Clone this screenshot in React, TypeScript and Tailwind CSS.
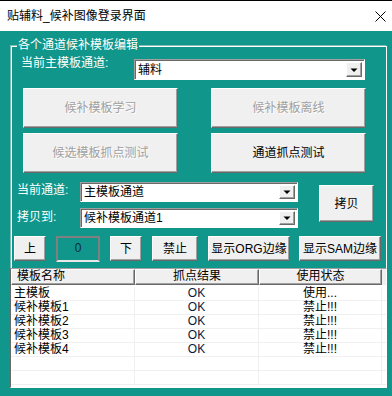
import React from "react";

const font = "font-['Liberation_Sans','Noto_Sans_CJK_SC',sans-serif]";

const raised =
  "bg-[#f0f0f0] border border-t-white border-l-white border-r-[#696969] border-b-[#696969] shadow-[inset_-1px_-1px_0_#a0a0a0]";

function WinButton({
  label,
  cls,
  disabled,
}: {
  label: string;
  cls: string;
  disabled?: boolean;
}) {
  return (
    <div
      className={`${raised} ${cls} flex shrink-0 items-center justify-center text-[12px] leading-[14px] ${
        disabled
          ? "text-[#a0a0a0] [text-shadow:1px_1px_0_#ffffff]"
          : "text-black"
      }`}
    >
      {label}
    </div>
  );
}

function Arrow() {
  return (
    <div
      className={`${raised} absolute right-[2px] top-[2px] bottom-[2px] flex w-[16px] items-center justify-center`}
    >
      <svg width="8" height="6" viewBox="0 0 8 6">
        <path d="M0.5 1.5h7L4 5z" fill="#000" />
      </svg>
    </div>
  );
}

function Combo({ value, cls }: { value: string; cls: string }) {
  return (
    <div
      className={`relative ${cls} shrink-0 bg-white border border-t-[#a0a0a0] border-l-[#a0a0a0] border-b-white border-r-white shadow-[inset_1px_1px_0_#696969]`}
    >
      <span className="absolute left-[3px] top-1/2 -translate-y-1/2 text-[12px] leading-[14px] text-black">
        {value}
      </span>
      <Arrow />
    </div>
  );
}

const rows = [
  ["主模板", "OK", "使用..."],
  ["候补模板1", "OK", "禁止!!!"],
  ["候补模板2", "OK", "禁止!!!"],
  ["候补模板3", "OK", "禁止!!!"],
  ["候补模板4", "OK", "禁止!!!"],
  ["", "", ""],
  ["", "", ""],
];

export default function App() {
  return (
    <div
      className={`${font} h-[396px] w-[392px] overflow-hidden bg-[#10968a]`}
    >
      <div className="h-[1px] bg-black" />
      <div className="flex h-[30px] items-center justify-between bg-white pl-[7px] pr-[6px]">
        <span className="text-[12px] leading-[14px] text-black">
          贴辅料_候补图像登录界面
        </span>
        <svg width="11" height="11" viewBox="0 0 11 11">
          <path d="M0.5 0.5l10 10M10.5 0.5l-10 10" stroke="#000" strokeWidth="1" />
        </svg>
      </div>

      <div className="relative ml-[11px] mt-[15px] w-[376px] border border-b-0 border-white shadow-[-1px_-1px_0_#7fbdb6]">
        <span className="absolute -top-[9px] left-[5px] bg-[#10968a] px-[1px] text-[12px] leading-[14px] text-white">
          各个通道候补模板编辑
        </span>

        <div className="mt-[12px] flex h-[21px] items-start">
          <span className="-mt-[3px] ml-[9px] w-[113px] shrink-0 text-[12px] leading-[14px] text-white">
            当前主模板通道:
          </span>
          <Combo value="辅料" cls="h-[21px] w-[231px]" />
        </div>

        <div className="mt-[8px] flex">
          <WinButton label="候补模板学习" cls="ml-[11px] h-[40px] w-[155px]" disabled />
          <WinButton label="候补模板离线" cls="ml-[33px] h-[40px] w-[155px]" disabled />
        </div>
        <div className="mt-[5px] flex">
          <WinButton label="候选模板抓点测试" cls="ml-[11px] h-[40px] w-[155px]" disabled />
          <WinButton label="通道抓点测试" cls="ml-[33px] h-[40px] w-[155px]" />
        </div>

        <div className="mt-[9px] flex items-start">
          <div className="flex flex-col">
            <div className="flex h-[20px] items-center">
              <span className="-mt-[5px] ml-[5px] w-[63px] text-[12px] leading-[14px] text-white">
                当前通道:
              </span>
              <Combo value="主模板通道" cls="h-[20px] w-[218px]" />
            </div>
            <div className="mt-[6px] flex h-[20px] items-center">
              <span className="-mt-[2px] ml-[5px] w-[63px] text-[12px] leading-[14px] text-white">
                拷贝到:
              </span>
              <Combo value="候补模板通道1" cls="h-[20px] w-[218px]" />
            </div>
          </div>
          <WinButton label="拷贝" cls="ml-[21px] mt-[3px] h-[37px] w-[55px]" />
        </div>

        <div className="mt-[8px] flex items-start">
          <WinButton label="上" cls="ml-[2px] h-[25px] w-[32px]" />
          <div className="ml-[10px] flex h-[26px] w-[44px] shrink-0 justify-center border-2 border-t-[#808080] border-l-[#808080] border-r-[#808080] border-b-[#e8e8e8] pt-[3px] text-[12px] leading-[14px] text-[#0a2a3a]">
            0
          </div>
          <WinButton label="下" cls="ml-[10px] h-[25px] w-[32px]" />
          <WinButton label="禁止" cls="ml-[10px] h-[25px] w-[46px]" />
          <WinButton label="显示ORG边缘" cls="ml-[10px] h-[25px] w-[82px]" />
          <WinButton label="显示SAM边缘" cls="ml-[9px] h-[25px] w-[82px]" />
        </div>

        <div className="-ml-[2px] mt-[6px] h-[120px] w-[377px] overflow-hidden border border-t-[#a0a0a0] border-l-[#696969] border-r-white border-b-white bg-white">
          <div className="flex h-[16px] bg-[#f0f0f0]">
            <div className={`${raised} w-[124px] pl-[5px] text-[12px] leading-[13px] text-black`}>
              模板名称
            </div>
            <div className={`${raised} w-[124px] text-center text-[12px] leading-[13px] text-black`}>
              抓点结果
            </div>
            <div className={`${raised} w-[123px] text-center text-[12px] leading-[13px] text-black`}>
              使用状态
            </div>
          </div>
          <div className="pt-[2px]">
            {rows.map((r, i) => (
              <div key={i} className="flex h-[14px] border-b border-[#f0f0f0]">
                <div className="w-[124px] border-r border-[#f0f0f0] pl-[3px] text-[12px] leading-[13px] text-black">
                  {r[0]}
                </div>
                <div className="w-[124px] border-r border-[#f0f0f0] text-center text-[12px] leading-[13px] text-[#0a1a3a]">
                  {r[1]}
                </div>
                <div className="w-[123px] border-r border-[#f0f0f0] text-center text-[12px] leading-[13px] text-black">
                  {r[2]}
                </div>
              </div>
            ))}
          </div>
        </div>
      </div>
    </div>
  );
}
